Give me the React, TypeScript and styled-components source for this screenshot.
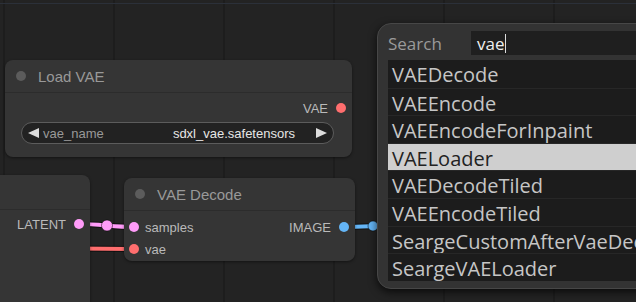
import React from "react";
import styled, { createGlobalStyle } from "styled-components";

const Global = createGlobalStyle`
  html, body { margin: 0; padding: 0; background: #222; }
  body { overflow: hidden; }
`;

const Canvas = styled.div`
  position: relative;
  width: 636px;
  height: 302px;
  overflow: hidden;
  background-color: #232323;
  background-image:
    linear-gradient(to bottom, transparent 3px, #2b3039 3px, #2b3039 4px, transparent 4px),
    repeating-linear-gradient(to right, #1d1d1d 0 2px, transparent 2px 110px);
  background-position: 0 0, 3px 0;
  font-family: "Liberation Sans", Arial, sans-serif;
`;

const Links = styled.svg`
  position: absolute;
  left: 0;
  top: 0;
  z-index: 0;
`;

const Node = styled.div<{ $x: number; $y: number; $w: number; $h: number }>`
  position: absolute;
  left: ${(p) => p.$x}px;
  top: ${(p) => p.$y}px;
  width: ${(p) => p.$w}px;
  height: ${(p) => p.$h}px;
  z-index: 1;
  background: #353535;
  border-radius: 8px;
  box-shadow: 0 1px 3px rgba(0, 0, 0, 0.45);
  display: flex;
  flex-direction: column;
  box-sizing: border-box;
`;

const Title = styled.div<{ $h?: number }>`
  height: ${(p) => p.$h ?? 33}px;
  flex: none;
  box-sizing: border-box;
  border-bottom: 1px solid #2c2c2c;
  display: flex;
  align-items: center;
  gap: 12px;
  padding-left: 11px;
  color: #999;
  font-size: 15px;
`;

const TitleDot = styled.span`
  width: 10px;
  height: 10px;
  border-radius: 50%;
  background: #5c5c5c;
  flex: none;
`;

const Body = styled.div<{ $pt?: number }>`
  display: flex;
  flex-direction: column;
  padding-top: ${(p) => p.$pt ?? 4}px;
`;

const SlotRow = styled.div`
  height: 22px;
  display: flex;
  align-items: center;
  font-size: 13px;
  color: #bababa;
`;

const Input = styled.div`
  display: flex;
  align-items: center;
  gap: 6px;
  padding-left: 5px;
`;

const Output = styled.div`
  display: flex;
  align-items: center;
  gap: 8px;
  padding-right: 6px;
  margin-left: auto;
`;

const Dot = styled.span<{ $c: string }>`
  width: 10px;
  height: 10px;
  border-radius: 50%;
  background: ${(p) => p.$c};
  flex: none;
`;

const Widget = styled.div`
  margin: 3px 18px 0 16px;
  height: 22px;
  box-sizing: border-box;
  border-radius: 11px;
  background: #222;
  border: 1px solid #5c5c5c;
  display: flex;
  align-items: center;
  padding: 0 6px;
  font-size: 13px;
`;

const Arrow = styled.span<{ $dir: "left" | "right" }>`
  width: 0;
  height: 0;
  flex: none;
  border-top: 5px solid transparent;
  border-bottom: 5px solid transparent;
  ${(p) =>
    p.$dir === "left"
      ? "border-right: 11px solid #ddd;"
      : "border-left: 11px solid #ddd;"}
`;

const WidgetLabel = styled.span`
  color: #999;
  margin-left: 4px;
`;

const WidgetValue = styled.span`
  color: #e6e6e6;
  margin-left: auto;
  margin-right: 21px;
`;

const SearchBox = styled.div`
  position: absolute;
  left: 377px;
  top: 23px;
  width: 330px;
  height: 266px;
  z-index: 2;
  box-sizing: border-box;
  background: #333;
  border: 1px solid #474747;
  border-radius: 14px;
  box-shadow: 0 3px 8px rgba(0, 0, 0, 0.7);
  padding: 7px 0 0 10px;
  font-family: "Open Sans", "Noto Sans", sans-serif;
  display: flex;
  flex-direction: column;
`;

const SearchHeader = styled.div`
  display: flex;
  align-items: center;
  height: 24px;
`;

const SearchLabel = styled.span`
  width: 83px;
  flex: none;
  color: #9a9a9a;
  font-size: 17px;
`;

const SearchInput = styled.div`
  flex: 1;
  height: 24px;
  background: #1f1f1f;
  display: flex;
  align-items: center;
  padding-left: 6px;
  color: #eee;
  font-size: 17px;
`;

const Caret = styled.span`
  width: 1px;
  height: 19px;
  background: #ddd;
  margin-left: 1px;
`;

const List = styled.div`
  margin-top: 5px;
  background: #1c1c1c;
  display: flex;
  flex-direction: column;
`;

const Item = styled.div<{ $active?: boolean }>`
  height: 27.6px;
  box-sizing: border-box;
  padding: 1px 0 0 4px;
  line-height: 27px;
  font-size: 20px;
  white-space: nowrap;
  color: ${(p) => (p.$active ? "#222" : "#c6c6c6")};
  background: ${(p) => (p.$active ? "#cfcfcf" : "transparent")};
  & + & {
    border-top: 1px solid #272727;
  }
`;

const items = [
  "VAEDecode",
  "VAEEncode",
  "VAEEncodeForInpaint",
  "VAELoader",
  "VAEDecodeTiled",
  "VAEEncodeTiled",
  "SeargeCustomAfterVaeDecode",
  "SeargeVAELoader",
];

const PINK = "#ff9cf9";
const RED = "#ff6e6e";
const BLUE = "#64b5f6";

export default function App() {
  return (
    <>
      <Global />
      <Canvas>
        <Links width={636} height={302}>
          <g fill="none" strokeLinecap="round">
            <path d="M 79 224 C 100 224, 113 227, 134 227" stroke="rgba(0,0,0,0.55)" strokeWidth={6} />
            <path d="M 79 224 C 100 224, 113 227, 134 227" stroke={PINK} strokeWidth={4} />
            <path d="M 20 248 L 134 249" stroke="rgba(0,0,0,0.55)" strokeWidth={6} />
            <path d="M 20 248 L 134 249" stroke={RED} strokeWidth={4} />
            <path d="M 345 227 C 360 227, 370 226, 400 225" stroke="rgba(0,0,0,0.55)" strokeWidth={6} />
            <path d="M 345 227 C 360 227, 370 226, 400 225" stroke={BLUE} strokeWidth={4} />
          </g>
          <circle cx={107} cy={225.5} r={5.5} fill={PINK} stroke="rgba(0,0,0,0.5)" strokeWidth={1} />
          <circle cx={373} cy={226} r={5} fill={BLUE} stroke="rgba(0,0,0,0.5)" strokeWidth={1} />
        </Links>

        <Node $x={5} $y={60} $w={347} $h={97}>
          <Title>
            <TitleDot />
            Load VAE
          </Title>
          <Body>
            <SlotRow>
              <Output>
                VAE
                <Dot $c={RED} />
              </Output>
            </SlotRow>
            <Widget>
              <Arrow $dir="left" />
              <WidgetLabel>vae_name</WidgetLabel>
              <WidgetValue>sdxl_vae.safetensors</WidgetValue>
              <Arrow $dir="right" />
            </Widget>
          </Body>
        </Node>

        <Node $x={-12} $y={175} $w={102} $h={160}>
          <Title $h={35} />
          <Body $pt={3}>
            <SlotRow>
              <Output>
                LATENT
                <Dot $c={PINK} />
              </Output>
            </SlotRow>
          </Body>
        </Node>

        <Node $x={124} $y={178} $w={231} $h={83}>
          <Title>
            <TitleDot />
            VAE Decode
          </Title>
          <Body $pt={5}>
            <SlotRow>
              <Input>
                <Dot $c={PINK} />
                samples
              </Input>
              <Output>
                IMAGE
                <Dot $c={BLUE} />
              </Output>
            </SlotRow>
            <SlotRow>
              <Input>
                <Dot $c={RED} />
                vae
              </Input>
            </SlotRow>
          </Body>
        </Node>

        <SearchBox>
          <SearchHeader>
            <SearchLabel>Search</SearchLabel>
            <SearchInput>
              vae
              <Caret />
            </SearchInput>
          </SearchHeader>
          <List>
            {items.map((it) => (
              <Item key={it} $active={it === "VAELoader"}>
                {it}
              </Item>
            ))}
          </List>
        </SearchBox>
      </Canvas>
    </>
  );
}
